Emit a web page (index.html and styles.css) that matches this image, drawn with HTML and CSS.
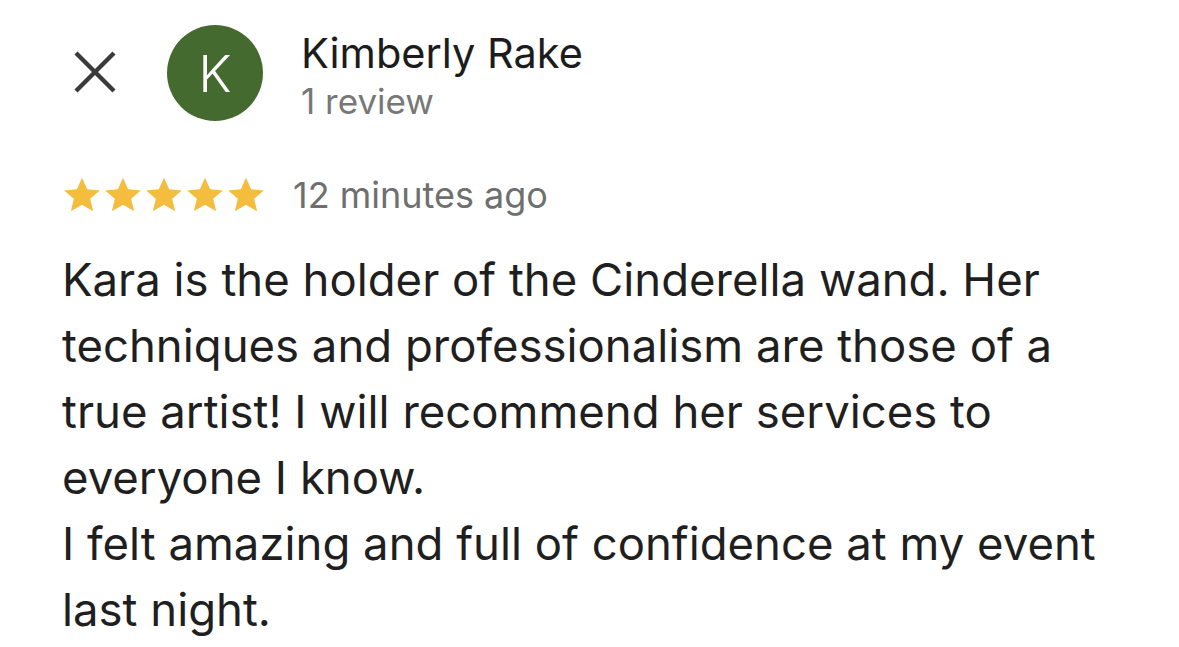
FILE: index.html
```html
<!DOCTYPE html>
<html lang="en">
<head>
<meta charset="utf-8">
<title>Review</title>
<link rel="stylesheet" href="styles.css">
</head>
<body>
<div class="review">
  <div class="header">
    <button class="close" aria-label="Close">
      <svg viewBox="0 0 42 42" width="42" height="42"><path d="M2 2 L40 40 M40 2 L2 40" stroke="#3a3a3a" stroke-width="4.4" stroke-linecap="butt" fill="none"/></svg>
    </button>
    <div class="avatar">K</div>
    <div class="who">
      <div class="name">Kimberly Rake</div>
      <div class="count">1 review</div>
    </div>
  </div>
  <div class="meta">
    <div class="stars">
      <svg viewBox="0 0 24 24" class="star"><path d="M12 1.6l3.1 7 7.6.7-5.8 5 1.8 7.5L12 17.8l-6.7 4 1.8-7.5-5.8-5 7.6-.7z"/></svg>
      <svg viewBox="0 0 24 24" class="star"><path d="M12 1.6l3.1 7 7.6.7-5.8 5 1.8 7.5L12 17.8l-6.7 4 1.8-7.5-5.8-5 7.6-.7z"/></svg>
      <svg viewBox="0 0 24 24" class="star"><path d="M12 1.6l3.1 7 7.6.7-5.8 5 1.8 7.5L12 17.8l-6.7 4 1.8-7.5-5.8-5 7.6-.7z"/></svg>
      <svg viewBox="0 0 24 24" class="star"><path d="M12 1.6l3.1 7 7.6.7-5.8 5 1.8 7.5L12 17.8l-6.7 4 1.8-7.5-5.8-5 7.6-.7z"/></svg>
      <svg viewBox="0 0 24 24" class="star"><path d="M12 1.6l3.1 7 7.6.7-5.8 5 1.8 7.5L12 17.8l-6.7 4 1.8-7.5-5.8-5 7.6-.7z"/></svg>
    </div>
    <span class="time">12 minutes ago</span>
  </div>
  <p class="text">Kara is the holder of the Cinderella wand. Her techniques and professionalism are those of a true artist! I will recommend her services to everyone I know.<br>I felt amazing and full of confidence at my event last night.</p>
</div>
</body>
</html>
```

FILE: styles.css
```css
html, body {
  margin: 0;
  padding: 0;
  background: #ffffff;
}
body {
  font-family: Inter, "Noto Sans", Roboto, sans-serif;
  color: #1f1f1f;
}
.review {
  width: 1179px;
  height: 647px;
  overflow: hidden;
  box-sizing: border-box;
  padding: 25px 0 0 62px;
}
.header {
  display: flex;
  align-items: flex-start;
}
.close {
  border: 0;
  background: none;
  padding: 0;
  margin: 26px 0 0 12px;
  width: 42px;
  height: 42px;
  display: flex;
}
.avatar {
  margin-left: 51px;
  width: 96px;
  height: 96px;
  border-radius: 50%;
  background: #456a2f;
  color: #ffffff;
  display: flex;
  align-items: center;
  justify-content: center;
  font-size: 51px;
  font-weight: 300;
}
.who {
  margin-left: 38px;
  margin-top: 5px;
  display: flex;
  flex-direction: column;
}
.name {
  font-size: 41.5px;
  line-height: 46px;
  color: #1c1c1c;
  font-weight: 400;
}
.count {
  font-size: 35px;
  line-height: 40px;
  margin-top: 5px;
  color: #777777;
}
.meta {
  display: flex;
  align-items: center;
  margin-top: 52px;
}
.stars {
  display: flex;
  gap: 1px;
}
.star {
  width: 40px;
  height: 40px;
  fill: #f4bd3e;
}
.time {
  margin-left: 27px;
  font-size: 36px;
  color: #6f6f6f;
}
.text {
  margin: 30px 0 0 0;
  width: 1075px;
  font-size: 45.5px;
  line-height: 66px;
  color: #1f1f1f;
}
```
